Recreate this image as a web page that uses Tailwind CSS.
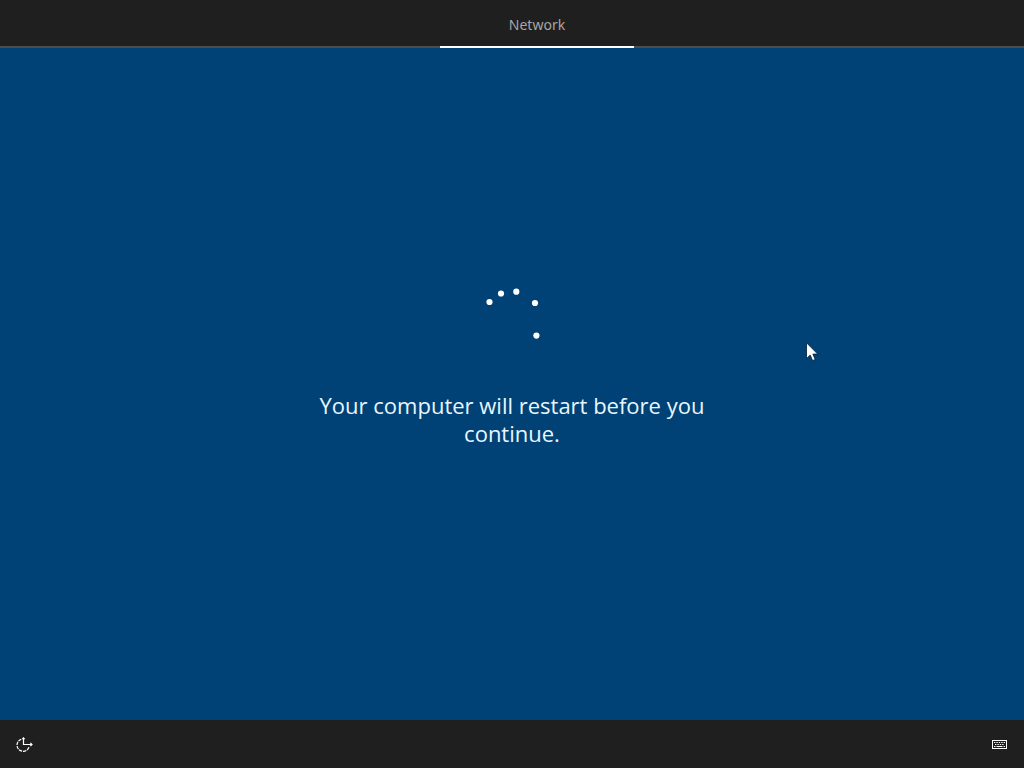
<!DOCTYPE html>
<html lang="en">
<head>
  <meta charset="UTF-8" />
  <meta name="viewport" content="width=device-width, initial-scale=1" />
  <title>Setup</title>
  <script src="https://cdn.jsdelivr.net/npm/@tailwindcss/browser@4"></script>
</head>
<body class="relative flex flex-col min-h-screen bg-[#004275] text-white font-['Open_Sans','Noto_Sans',sans-serif]">

  <!-- Top Navigation -->
  <header class="relative h-12 bg-[#1f1f1f]">
    <div class="absolute inset-x-0 bottom-0 h-[2px] bg-[#4c4c4c]"></div>
    <nav class="relative flex justify-center h-full pl-[50px]">
      <a href="#network" class="flex items-center justify-center w-[194px] pt-[2px] border-b-2 border-white text-[14px] text-[#a6a6a6] font-['Noto_Sans',sans-serif]">Network</a>
    </nav>
  </header>

  <!-- Restart Message -->
  <main class="flex-1 flex flex-col items-center justify-center px-6 pb-9">
    <svg class="w-[60px] h-[60px] mb-[45px]" viewBox="0 0 60 60" fill="#fff" role="img" aria-label="Loading">
      <circle cx="7.5" cy="16" r="3.1" />
      <circle cx="19" cy="7.5" r="3.1" />
      <circle cx="34.3" cy="5.7" r="3.1" />
      <circle cx="53" cy="17" r="3.1" />
      <circle cx="54.4" cy="49.6" r="3.1" />
    </svg>
    <h1 class="max-w-[400px] text-center text-[22px] leading-7 text-[#e8f6ff]">Your computer will restart before you continue.</h1>
  </main>

  <!-- Bottom Bar -->
  <footer class="flex items-center justify-between h-12 px-4 bg-[#1f1f1f]">
    <button type="button" aria-label="Ease of Access">
      <svg class="w-[17px] h-4" viewBox="0 0 17 16" fill="none" stroke="#fff" stroke-width="1.2">
        <path d="M5.3 3.2A6.2 6.2 0 1 0 13 11.3" stroke-dasharray="3.4 0.9" />
        <path d="M7.5 1.5V8.5H16" />
        <path d="M6.3 3.2L7.5 2L8.7 3.2M14.4 6.9L16 8.5L14.4 10.1" />
      </svg>
    </button>
    <button type="button" aria-label="Keyboard">
      <svg class="w-4 h-4" viewBox="0 0 16 16" fill="none" stroke="#fff">
        <rect x="0.5" y="4.5" width="14" height="8" />
        <path d="M2 6.5H13M3 8.5H12" stroke-dasharray="1.4 1" />
        <path d="M2 10.5H3.5M4.5 10.5H10.5M11.5 10.5H13" />
      </svg>
    </button>
  </footer>

  <!-- Mouse Pointer -->
  <svg class="absolute left-[806px] top-[342px] w-3 h-[19px]" viewBox="0 0 12 19" aria-hidden="true">
    <path d="M0.5 0.8V16.6L4.2 13.1L6.6 18.6L9.2 17.5L6.9 12.1H11.7Z" fill="#fff" stroke="#001b33" stroke-width="0.8" />
  </svg>

</body>
</html>
